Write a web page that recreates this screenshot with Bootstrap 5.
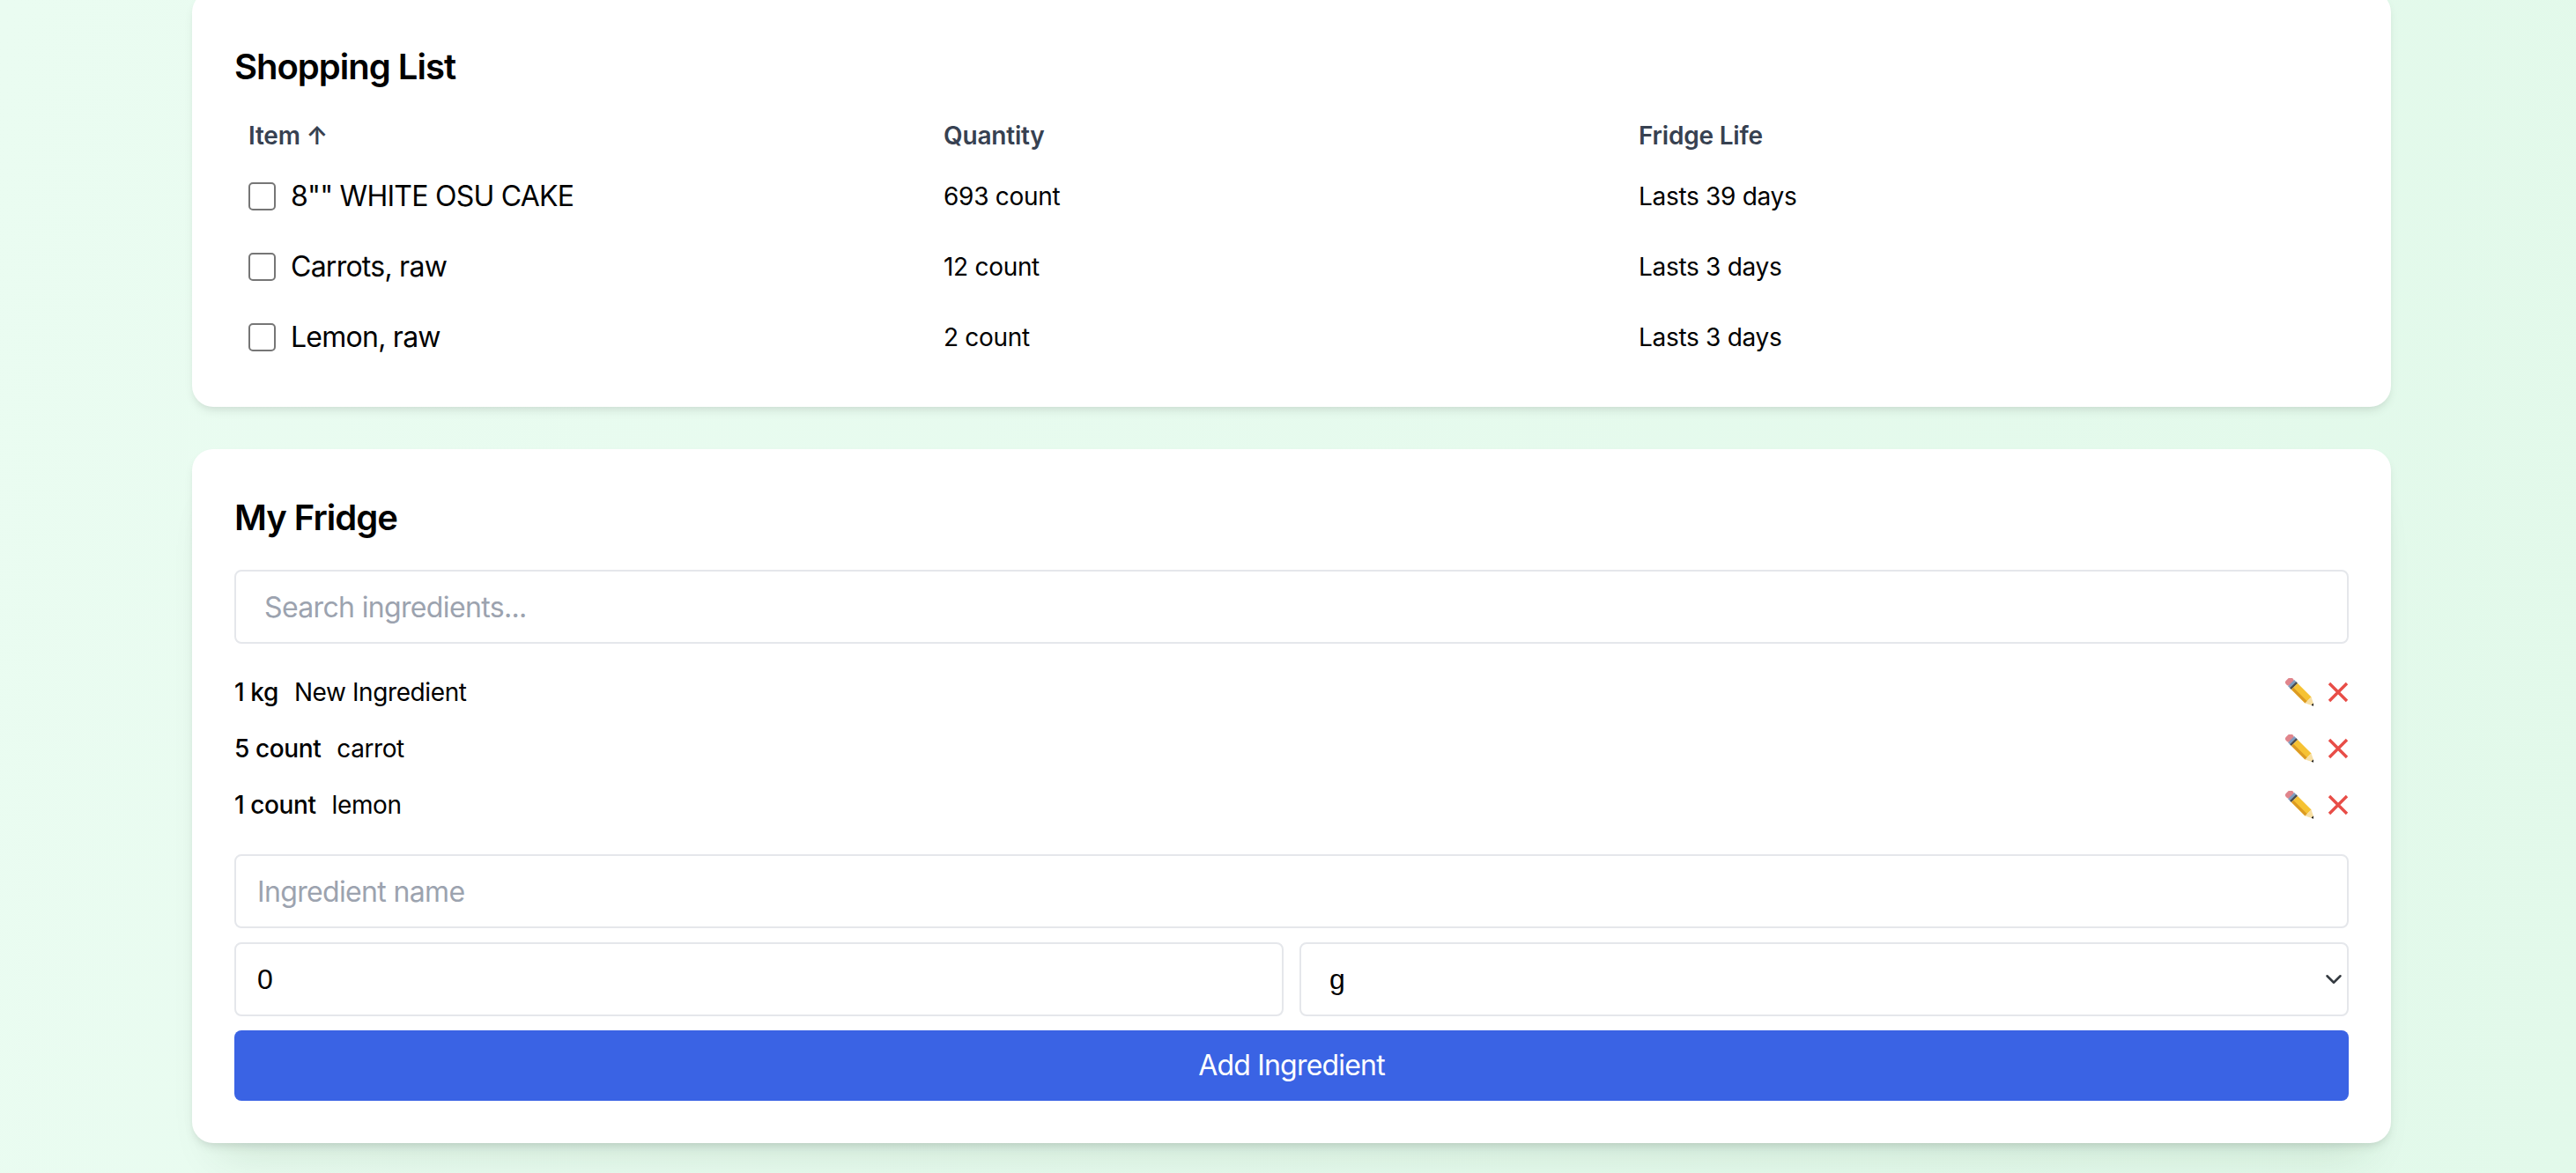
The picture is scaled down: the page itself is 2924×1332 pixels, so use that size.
<!doctype html>
<html lang="en">
<head>
    <meta charset="utf-8" />
    <meta name="viewport" content="width=device-width, initial-scale=1" />
    <title>Fridge</title>
    <link href="https://cdn.jsdelivr.net/npm/bootstrap@5.3.3/dist/css/bootstrap.min.css" rel="stylesheet" />
    <style>
        html, body { height: 100%; overflow: hidden; }
        body {
            font-family: 'Inter', 'Liberation Sans', sans-serif;
            color: #000;
            background: linear-gradient(100deg, #eafcf1 0%, #e2f9ea 100%);
        }
        .page-wrap { width: 2496px; margin: -10px 0 0 218px; }
        .panel-box {
            background: #fff;
            border-radius: 24px;
            padding: 58px 48px 39px;
            margin-bottom: 48px;
            box-shadow: 0 6px 12px -2px rgba(0,0,0,.09), 0 4px 8px -4px rgba(0,0,0,.06);
        }
        .panel-box + .panel-box {
            padding: 50px 48px 48px;
            box-shadow: 0 6px 12px -2px rgba(0,0,0,.09), 0 4px 8px -4px rgba(0,0,0,.06), 0 40px 50px -30px rgba(0,60,20,.12);
        }
        .panel-title { font-size: 40px; line-height: 56px; font-weight: 600; margin: 0; letter-spacing: -1px; color: #000; }
        .shop-table { width: 100%; table-layout: fixed; margin: 0; margin-top: 18px; }
        .shop-table th {
            font-size: 28px; line-height: 40px; font-weight: 600; color: #374151;
            padding: 12px 16px 9px; width: 789px; letter-spacing: -.2px;
        }
        .shop-table td { font-size: 28px; line-height: 40px; padding: 0 16px; height: 80px; vertical-align: middle; letter-spacing: -.3px; }
        .shop-table th:last-child { width: auto; }
        .item-check { width: 31px; height: 32px; border: 2px solid #767676; border-radius: 5px; margin: 0 17px 0 0; background: #fff; appearance: none; flex: none; }
        .item-name { font-size: 32px; letter-spacing: -.75px; }
        .fridge-input.form-control, .fridge-input.form-select {
            height: 84px; border: 2px solid #e5e7eb; border-radius: 8px; font-size: 32px; color: #000;
            padding: 0 24px; box-shadow: none; letter-spacing: -.65px;
        }
        .fridge-input::placeholder { color: #9ca3af; }
        .search-input.form-control { padding-left: 32px; margin-top: 31px; }
        .plain-font.form-control, .plain-font.form-select { font-family: 'Liberation Sans', sans-serif; letter-spacing: 0; }
        .plain-font.form-select { background-position: right 5px center; background-size: 20px 20px; padding-left: 32px; }
        .qty-line { grid-template-columns: 1fr 1fr; gap: 18px; }
        .fridge-rows { margin: 23px 0 24px; }
        .fridge-row { height: 64px; font-size: 28px; letter-spacing: -.4px; }
        .fridge-qty { font-weight: 500; margin-right: 18px; }
        .pencil-icon { width: 32px; height: 32px; }
        .cross-icon { width: 24px; height: 24px; margin-left: 16px; }
        .add-btn.btn { height: 80px; font-size: 32px; border-radius: 8px; background: #3a63e4; border: 0; color: #fff; letter-spacing: -.8px; }
    </style>
</head>
<body>
<svg width="0" height="0" class="position-absolute">
    <defs>
        <symbol id="pencil" viewBox="0 0 32 32">
            <g transform="translate(4.5 3.5) rotate(45)">
                <rect x="-3" y="-5" width="7" height="10" rx="3" fill="#e0858c"/>
                <rect x="3" y="-5" width="5" height="10" fill="#7e9cc0"/>
                <rect x="6" y="-5" width="2.5" height="10" fill="#4d4d4d"/>
                <rect x="8.5" y="-5" width="22" height="10" fill="#f6c233"/>
                <rect x="8.5" y="1.8" width="22" height="3.2" fill="#dc9a22"/>
                <path d="M30.500-5 L39 -0.600 39 .6 30.500 5Z" fill="#f7dfa4"/>
                <path d="M37 -1.600 L40 -.3 40 .3 37 1.600Z" fill="#1c1c1c"/>
            </g>
        </symbol>
        <symbol id="cross" viewBox="0 0 24 24">
            <path d="M2 2 L22 22 M22 2 L2 22" stroke="#e84d47" stroke-width="3.400" fill="none"/>
        </symbol>
    </defs>
</svg>
<div class="page-wrap">
    <!-- Shopping list -->
    <section class="panel-box">
        <h2 class="panel-title">Shopping List</h2>
        <table class="shop-table">
            <thead>
                <tr><th>Item ↑</th><th>Quantity</th><th>Fridge Life</th></tr>
            </thead>
            <tbody>
                <tr>
                    <td><label class="d-flex align-items-center"><input type="checkbox" class="item-check" /><span class="item-name">8"" WHITE OSU CAKE</span></label></td>
                    <td>693 count</td>
                    <td>Lasts 39 days</td>
                </tr>
                <tr>
                    <td><label class="d-flex align-items-center"><input type="checkbox" class="item-check" /><span class="item-name">Carrots, raw</span></label></td>
                    <td>12 count</td>
                    <td>Lasts 3 days</td>
                </tr>
                <tr>
                    <td><label class="d-flex align-items-center"><input type="checkbox" class="item-check" /><span class="item-name">Lemon, raw</span></label></td>
                    <td>2 count</td>
                    <td>Lasts 3 days</td>
                </tr>
            </tbody>
        </table>
    </section>

    <!-- Fridge -->
    <section class="panel-box">
        <h2 class="panel-title">My Fridge</h2>
        <input type="text" class="form-control fridge-input search-input" placeholder="Search ingredients..." />
        <div class="fridge-rows">
            <div class="fridge-row d-flex align-items-center justify-content-between">
                <div><span class="fridge-qty">1 kg</span><span>New Ingredient</span></div>
                <div class="d-flex align-items-center"><svg class="pencil-icon"><use href="#pencil"/></svg><svg class="cross-icon"><use href="#cross"/></svg></div>
            </div>
            <div class="fridge-row d-flex align-items-center justify-content-between">
                <div><span class="fridge-qty">5 count</span><span>carrot</span></div>
                <div class="d-flex align-items-center"><svg class="pencil-icon"><use href="#pencil"/></svg><svg class="cross-icon"><use href="#cross"/></svg></div>
            </div>
            <div class="fridge-row d-flex align-items-center justify-content-between">
                <div><span class="fridge-qty">1 count</span><span>lemon</span></div>
                <div class="d-flex align-items-center"><svg class="pencil-icon"><use href="#pencil"/></svg><svg class="cross-icon"><use href="#cross"/></svg></div>
            </div>
        </div>
        <input type="text" class="form-control fridge-input" placeholder="Ingredient name" />
        <div class="d-grid my-3 qty-line">
            <input type="number" class="form-control fridge-input plain-font" value="0" />
            <select class="form-select fridge-input plain-font">
                <option>g</option>
                <option>kg</option>
                <option>count</option>
            </select>
        </div>
        <button type="button" class="btn add-btn w-100">Add Ingredient</button>
    </section>
</div>
<script src="https://cdn.jsdelivr.net/npm/bootstrap@5.3.3/dist/js/bootstrap.bundle.min.js"></script>
</body>
</html>
